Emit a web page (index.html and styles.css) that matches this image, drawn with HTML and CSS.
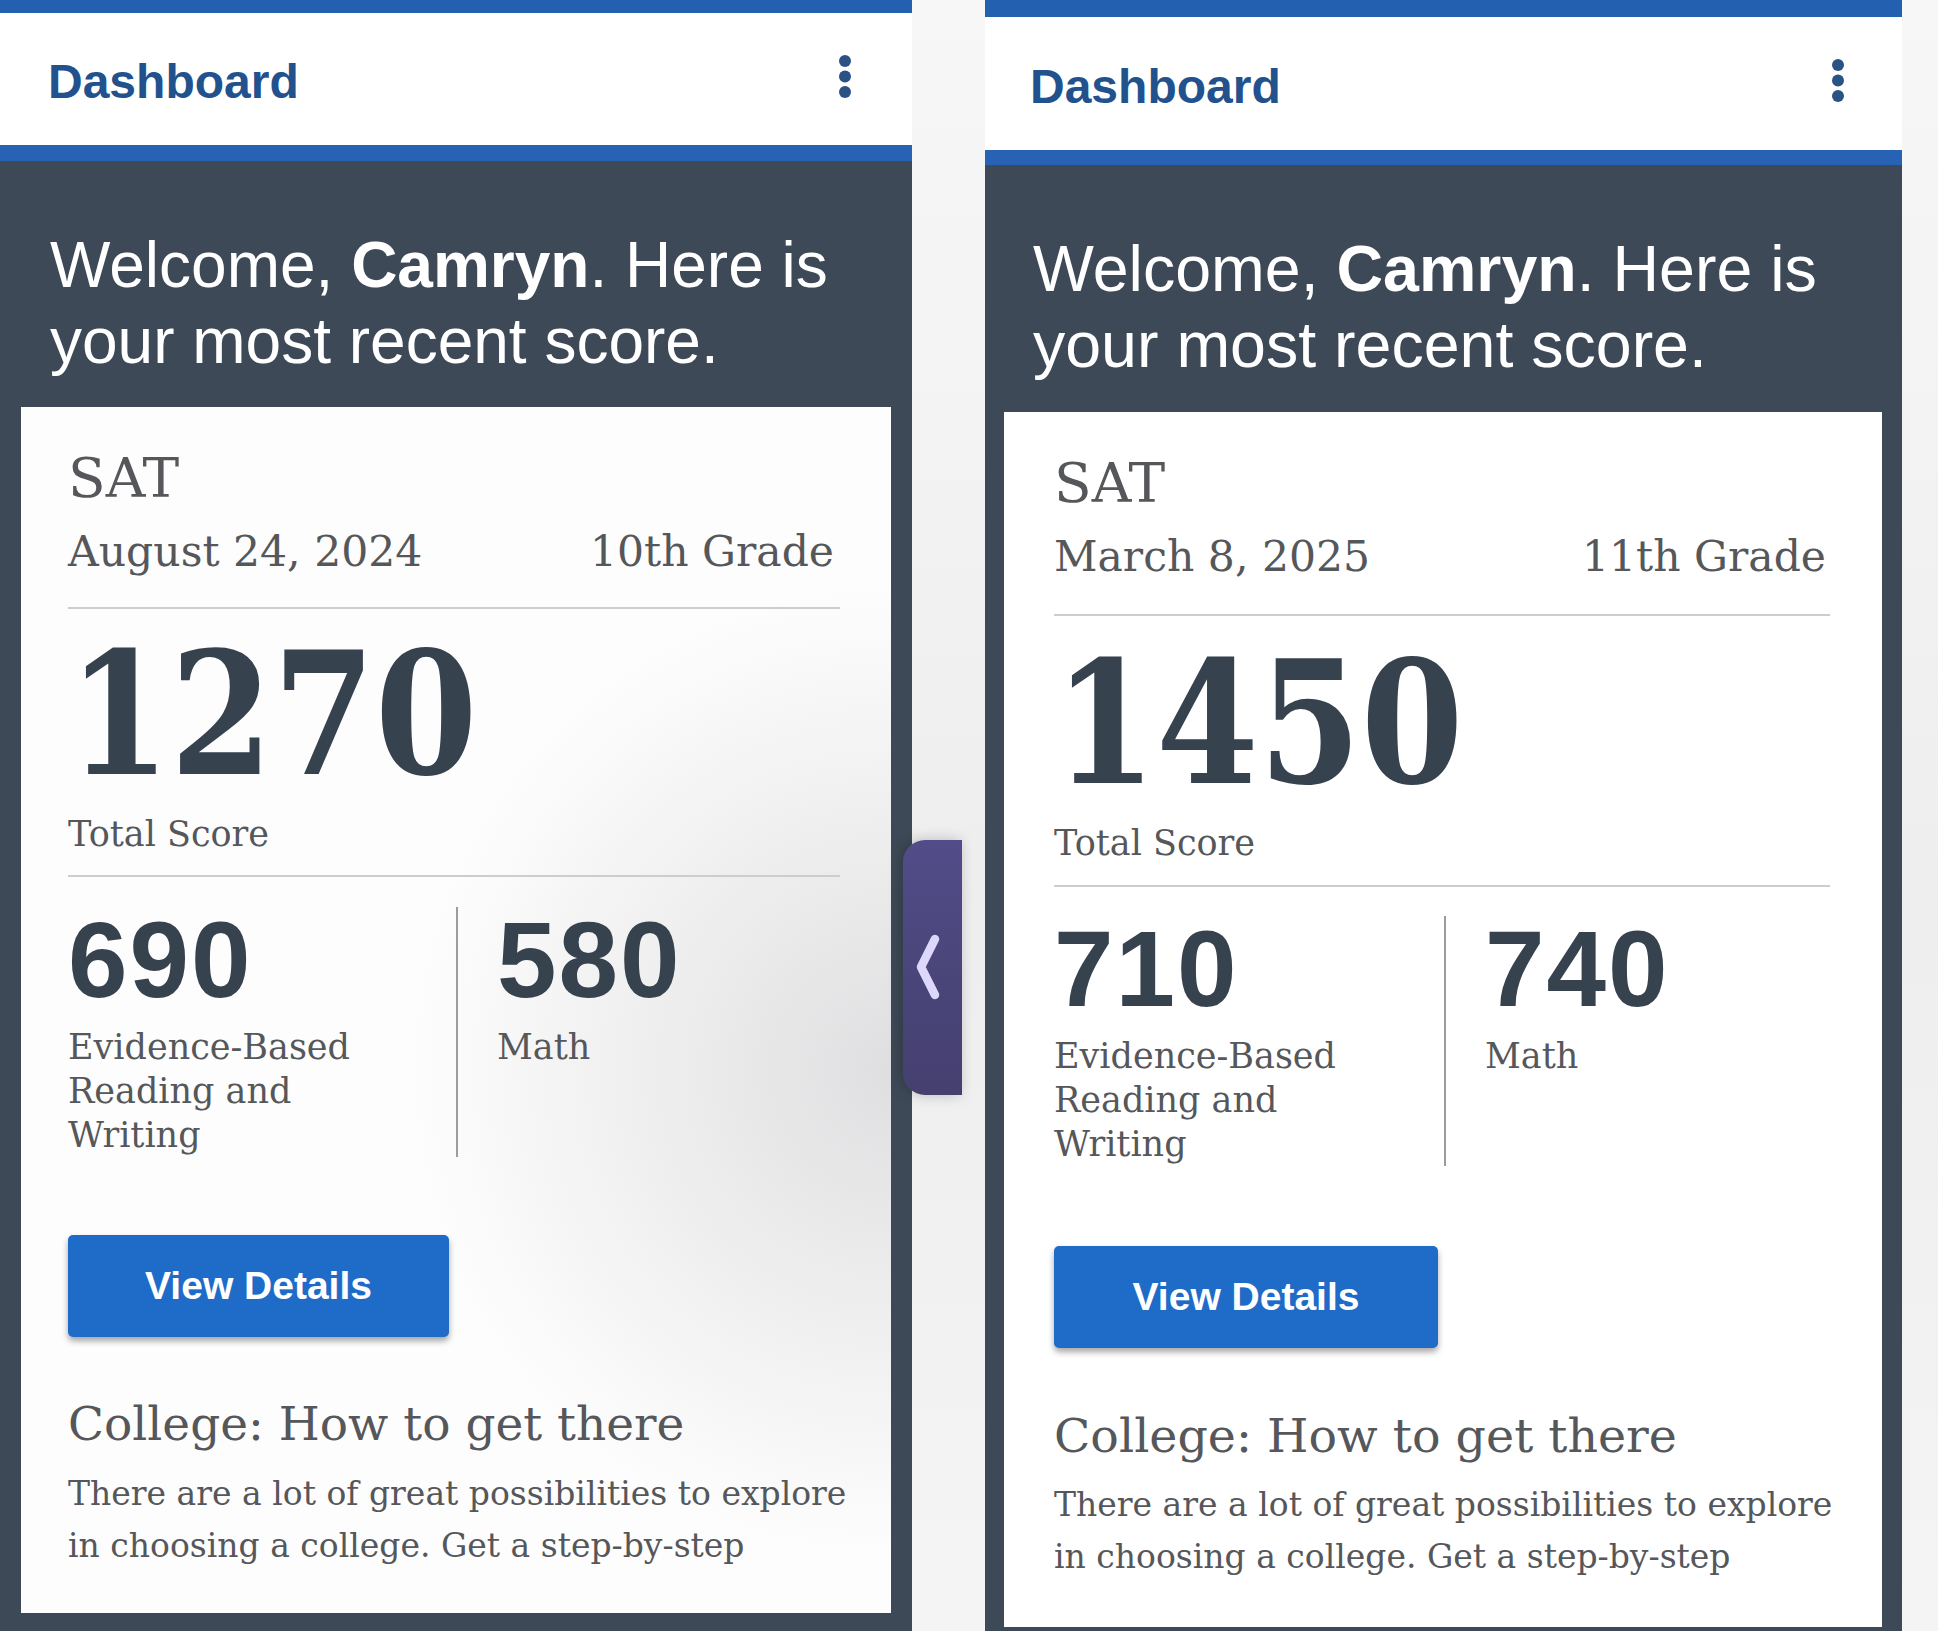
FILE: index.html
```html
<!DOCTYPE html>
<html lang="en">
<head>
<meta charset="utf-8">
<title>SAT Score Dashboard</title>
<link rel="stylesheet" href="styles.css">
</head>
<body>
<main class="compare">
  <section class="phone phone--a">
    <div class="topbar"></div>
    <header class="appbar">
      <h1 class="appbar__title">Dashboard</h1>
      <span class="kebab" aria-label="More options">
        <svg width="14" height="46" viewBox="0 0 14 46"><circle cx="7" cy="7" r="6"/><circle cx="7" cy="22.5" r="6"/><circle cx="7" cy="38" r="6"/></svg>
      </span>
    </header>
    <div class="accent"></div>
    <p class="welcome">Welcome, <strong>Camryn</strong>. Here is<br>your most recent score.</p>
    <article class="card">
      <h2 class="card__test">SAT</h2>
      <div class="card__meta"><span>August 24, 2024</span><span>10th Grade</span></div>
      <hr class="rule rule--first">
      <div class="total"><span class="total__num">1270</span></div>
      <div class="total__label">Total Score</div>
      <hr class="rule rule--second">
      <div class="sections">
        <div class="section">
          <div class="section__num">690</div>
          <div class="section__label">Evidence-Based Reading and Writing</div>
        </div>
        <div class="section section--split">
          <div class="section__num">580</div>
          <div class="section__label">Math</div>
        </div>
      </div>
      <button class="btn">View Details</button>
      <h3 class="promo__title">College: How to get there</h3>
      <p class="promo__text">There are a lot of great possibilities to explore in choosing a college. Get a step-by-step</p>
    </article>
  </section>

  <section class="phone phone--b">
    <div class="topbar"></div>
    <header class="appbar">
      <h1 class="appbar__title">Dashboard</h1>
      <span class="kebab" aria-label="More options">
        <svg width="14" height="46" viewBox="0 0 14 46"><circle cx="7" cy="7" r="6"/><circle cx="7" cy="22.5" r="6"/><circle cx="7" cy="38" r="6"/></svg>
      </span>
    </header>
    <div class="accent"></div>
    <p class="welcome">Welcome, <strong>Camryn</strong>. Here is<br>your most recent score.</p>
    <article class="card">
      <h2 class="card__test">SAT</h2>
      <div class="card__meta"><span>March 8, 2025</span><span>11th Grade</span></div>
      <hr class="rule rule--first">
      <div class="total"><span class="total__num">1450</span></div>
      <div class="total__label">Total Score</div>
      <hr class="rule rule--second">
      <div class="sections">
        <div class="section">
          <div class="section__num">710</div>
          <div class="section__label">Evidence-Based Reading and Writing</div>
        </div>
        <div class="section section--split">
          <div class="section__num">740</div>
          <div class="section__label">Math</div>
        </div>
      </div>
      <button class="btn">View Details</button>
      <h3 class="promo__title">College: How to get there</h3>
      <p class="promo__text">There are a lot of great possibilities to explore in choosing a college. Get a step-by-step</p>
    </article>
  </section>

  <div class="handle" aria-label="Previous">
    <svg width="30" height="80" viewBox="0 0 30 80"><polyline points="21,11 7,39 21,67" fill="none" stroke="#dcd7fb" stroke-width="8.5" stroke-linecap="round" stroke-linejoin="round"/></svg>
  </div>
</main>
</body>
</html>
```

FILE: styles.css
```css
* { box-sizing: border-box; }

html, body {
  margin: 0;
  padding: 0;
}

body {
  width: 1938px;
  height: 1631px;
  overflow: hidden;
  background: linear-gradient(to bottom, #f7f7f7 0%, #eeeeee 55%, #f4f4f4 100%);
  font-family: "Liberation Sans", Arial, sans-serif;
}

.compare {
  position: relative;
  display: flex;
  gap: 73px;
  height: 1631px;
}

.phone {
  display: flex;
  flex-direction: column;
  flex: none;
  height: 1631px;
  overflow: hidden;
  background: #3e4957;
}

.phone--a { width: 912px; }
.phone--b { width: 917px; }

.topbar {
  flex: none;
  height: 13px;
  background: #2460b0;
}
.phone--b .topbar { height: 17px; }

.appbar {
  flex: none;
  height: 132px;
  display: flex;
  align-items: center;
  justify-content: space-between;
  padding: 4px 60px 0 48px;
  background: #ffffff;
}
.phone--b .appbar {
  height: 133px;
  padding: 6px 57px 0 45px;
}

.appbar__title {
  margin: 0;
  font-size: 48px;
  font-weight: 700;
  color: #22528e;
}

.kebab {
  display: flex;
  margin-bottom: 8px;
  fill: #2a5285;
}
.phone--b .kebab { margin-bottom: 11px; }

.accent {
  flex: none;
  height: 16px;
  background: #2862b4;
}
.phone--b .accent { height: 15px; }

.welcome {
  flex: none;
  margin: 66px 0 0;
  padding: 0 30px 0 50px;
  font-size: 64px;
  line-height: 76px;
  color: #ffffff;
}
.phone--b .welcome {
  padding-left: 48px;
  font-size: 64.5px;
}

.welcome strong { font-weight: 700; }

.card {
  flex: none;
  margin: 28px 21px 0;
  padding: 38px 18px 41px 47px;
  background:
    radial-gradient(ellipse 55% 40% at 100% 55%, rgba(218, 218, 220, 0.85), rgba(255, 255, 255, 0) 100%),
    #fdfdfd;
  font-family: "DejaVu Serif", serif;
  color: #55575a;
}
.phone--b .card {
  margin: 29px 20px 0 19px;
  padding: 38px 18px 44px 50px;
  background: #ffffff;
}

.card__test {
  margin: 0;
  font-size: 55px;
  line-height: 66px;
  font-weight: 400;
}

.card__meta {
  display: flex;
  justify-content: space-between;
  margin: 15px 39px 0 0;
  font-size: 42.5px;
  line-height: 52px;
}
.phone--b .card__meta { margin-right: 38px; }

.rule {
  margin: 0 33px 0 0;
  height: 2px;
  border: 0;
  background: #cdcdcd;
}
.phone--b .rule { margin-right: 34px; }

.rule--first { margin-top: 29px; }
.phone--b .rule--first { margin-top: 31px; }

.rule--second { margin-top: 20px; }
.phone--b .rule--second { margin-top: 21px; }

.total {
  margin-top: 20px;
  height: 170px;
  line-height: 170px;
}
.phone--b .total { margin-top: 22px; }

.total__num {
  display: inline-block;
  font-size: 170px;
  font-weight: 700;
  color: #37424f;
  transform: scaleX(0.865);
  transform-origin: 0 50%;
}

.total__label {
  margin-top: 14px;
  font-size: 35px;
  line-height: 42px;
}

.sections {
  display: grid;
  grid-template-columns: 388px 1fr;
  margin-top: 30px;
}
.phone--b .sections {
  grid-template-columns: 390px 1fr;
  margin-top: 29px;
}

.section__num {
  font-family: "Liberation Sans", Arial, sans-serif;
  font-size: 107px;
  line-height: 106px;
  font-weight: 700;
  letter-spacing: 2px;
  color: #37424f;
}

.section__label {
  max-width: 320px;
  margin-top: 12px;
  font-size: 35px;
  line-height: 44px;
}

.section--split {
  padding-left: 39px;
  border-left: 2px solid #9c9c9c;
}

.btn {
  display: block;
  width: 381px;
  height: 102px;
  margin-top: 78px;
  padding: 0;
  border: 0;
  border-radius: 5px;
  background: #1f6bc8;
  box-shadow: 0 4px 6px rgba(0, 0, 0, 0.35);
  font-family: "Liberation Sans", Arial, sans-serif;
  font-size: 39px;
  font-weight: 700;
  color: #ffffff;
}
.phone--b .btn {
  width: 384px;
  margin-top: 80px;
}

.promo__title {
  margin: 60px 0 0;
  font-size: 47px;
  line-height: 54px;
  font-weight: 400;
}
.phone--b .promo__title {
  margin-top: 61px;
  font-size: 47.5px;
}

.promo__text {
  margin: 17px 0 0;
  font-size: 33px;
  line-height: 52px;
}
.phone--b .promo__text { margin-top: 16px; }

.handle {
  position: absolute;
  left: 903px;
  top: 840px;
  width: 59px;
  height: 255px;
  display: flex;
  align-items: center;
  justify-content: center;
  padding-right: 8px;
  border-radius: 22px 0 0 22px;
  background: linear-gradient(to bottom, #524c89 0%, #4a4579 55%, #45406f 100%);
  box-shadow: -2px 0 14px rgba(0, 0, 0, 0.22);
}
```
